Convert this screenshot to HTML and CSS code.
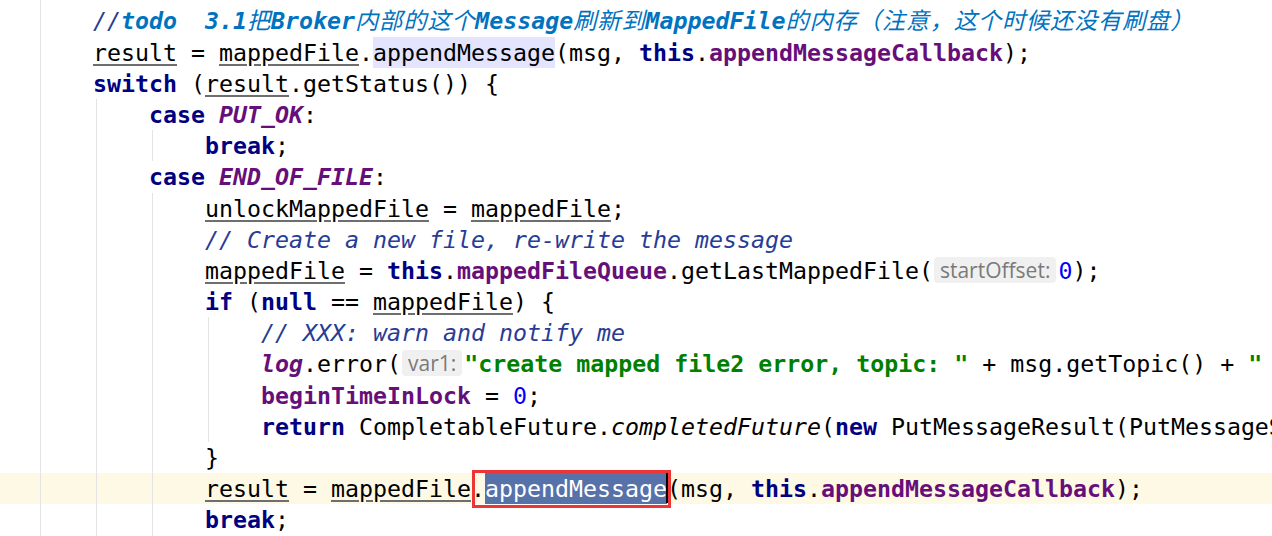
FILE: index.html
```html
<!DOCTYPE html>
<html lang="zh">
<head>
  <meta charset="UTF-8" />
  <title>CommitLog.java</title>
  <link rel="stylesheet" href="styles.css">
</head>
<body>
  <div class="editor">
    <div class="scope root">
      <div class="line"><span class="cmt">//</span><span class="todo">todo  3.1<span class="cjk">把</span>Broker<span class="cjk">内部的这个</span>Message<span class="cjk">刷新到</span>MappedFile<span class="cjk">的内存（注意，这个时候还没有刷盘）</span></span></div>
      <div class="line"><span class="var">result</span> = <span class="var">mappedFile</span>.<span class="usage">appendMessage</span>(msg, <span class="kw">this</span>.<span class="fld">appendMessageCallback</span>);</div>
      <div class="line"><span class="kw">switch</span> (<span class="var">result</span>.getStatus()) {</div>
      <div class="scope">
        <div class="line"><span class="kw">case</span> <span class="const">PUT_OK</span>:</div>
        <div class="scope">
          <div class="line"><span class="kw">break</span>;</div>
        </div>
        <div class="line"><span class="kw">case</span> <span class="const">END_OF_FILE</span>:</div>
        <div class="scope">
          <div class="line"><span class="var">unlockMappedFile</span> = <span class="var">mappedFile</span>;</div>
          <div class="line"><span class="cmt">// Create a new file, re-write the message</span></div>
          <div class="line"><span class="var">mappedFile</span> = <span class="kw">this</span>.<span class="fld">mappedFileQueue</span>.getLastMappedFile(<span class="hint">startOffset:</span><span class="num">0</span>);</div>
          <div class="line"><span class="kw">if</span> (<span class="kw">null</span> == <span class="var">mappedFile</span>) {</div>
          <div class="scope">
            <div class="line"><span class="cmt">// XXX: warn and notify me</span></div>
            <div class="line"><span class="const">log</span>.error(<span class="hint">var1:</span><span class="str">"create mapped file2 error, topic: "</span> + msg.getTopic() + <span class="str">" clientAddr: "</span> + msg.getBornHostString());</div>
            <div class="line"><span class="fld">beginTimeInLock</span> = <span class="num">0</span>;</div>
            <div class="line"><span class="kw">return</span> CompletableFuture.<span class="ital">completedFuture</span>(<span class="kw">new</span> PutMessageResult(PutMessageStatus.<span class="const">CREATE_MAPEDFILE_FAILED</span>, <span class="var">result</span>));</div>
          </div>
          <div class="line">}</div>
          <div class="line current"><span class="var">result</span> = <span class="var">mappedFile</span>.<span class="sel">appendMessage</span>(msg, <span class="kw">this</span>.<span class="fld">appendMessageCallback</span>);</div>
          <div class="line"><span class="kw">break</span>;</div>
        </div>
      </div>
    </div>
  </div>
</body>
</html>
```

FILE: styles.css
```css
html {
  background: #ffffff;
}
body {
  margin: 0;
  overflow: hidden;
  color: #000000;
  font-family: "DejaVu Sans Mono", "Noto Sans CJK SC", monospace;
  font-size: 23.25px;
  line-height: 31.2px;
}
.editor {
  height: 536px;
  overflow: hidden;
}
.scope {
  margin-left: 3px;
  padding-left: 52px;
  border-left: 1px solid #e3e3e3;
}
.root {
  margin-left: 40px;
  padding-top: 5.4px;
  min-height: 536px;
  box-sizing: border-box;
}
.line {
  height: 31.2px;
  white-space: pre;
}
.line.current {
  position: relative;
}
.line.current::before {
  content: '';
  position: absolute;
  top: 0;
  bottom: 0;
  left: -220px;
  right: 0;
  background: #fef9e4;
  z-index: -1;
}
.kw {
  color: #000080;
  font-weight: bold;
}
.fld {
  color: #660e7a;
  font-weight: bold;
}
.const {
  color: #660e7a;
  font-weight: bold;
  font-style: italic;
}
.str {
  color: #008000;
  font-weight: bold;
}
.num {
  color: #0000ff;
}
.cmt {
  color: #283c96;
  font-style: italic;
}
.todo {
  color: #0073bf;
  font-weight: bold;
  font-style: italic;
}
.cjk {
  font-weight: normal;
  letter-spacing: 0.8px;
}
.ital {
  font-style: italic;
}
.var {
  text-decoration: underline;
  text-decoration-color: #6e6e6e;
  text-underline-offset: 3px;
}
.usage {
  display: inline-block;
  vertical-align: top;
  background: #e4e4ff;
}
.sel {
  display: inline-block;
  vertical-align: top;
  position: relative;
  background: #5771a9;
  color: #ffffff;
}
.sel::before {
  content: '';
  position: absolute;
  top: 0;
  bottom: 1px;
  right: -1px;
  width: 2px;
  background: #000000;
}
.sel::after {
  content: '';
  position: absolute;
  top: -3.4px;
  bottom: -3.4px;
  left: -13px;
  right: -4px;
  border: 3px solid #ee3535;
}
.hint {
  display: inline-block;
  vertical-align: top;
  height: 26px;
  margin: 2px 2px 0 1px;
  padding: 0 6px;
  border-radius: 4px;
  background: #f0f0f0;
  color: #7a7a7a;
  font-family: "Open Sans", sans-serif;
  font-size: 21px;
  font-weight: normal;
  font-style: normal;
  line-height: 26px;
}
```
